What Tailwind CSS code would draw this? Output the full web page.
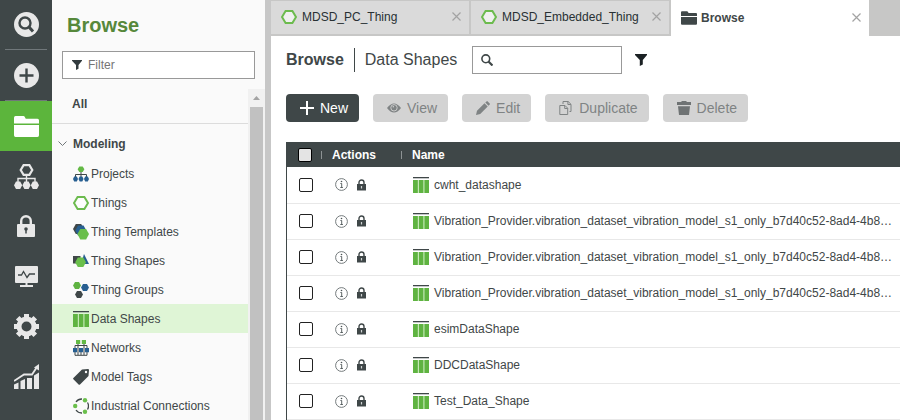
<!DOCTYPE html>
<html lang="en">
<head>
<meta charset="utf-8">
<meta name="viewport" content="width=device-width, initial-scale=1">
<title>Browse - Data Shapes</title>
<script src="https://cdn.jsdelivr.net/npm/@tailwindcss/browser@4"></script>
</head>
<body class="flex h-screen overflow-hidden bg-white font-['Liberation_Sans',Arial,sans-serif] text-xs text-[#3f4748]">

<!-- Shared icons -->
<svg class="hidden" aria-hidden="true">
  <symbol id="hexagon" viewBox="0 0 16 16"><path d="M4.6 2h6.8L15 8l-3.600 6H4.600L1 8z" fill="#fff" fill-opacity=".6" stroke="#6cbb4e" stroke-width="2"/></symbol>
  <symbol id="shape" viewBox="0 0 16 16"><path d="M0 0h16v1.300H0z" fill="#3f4748"/><path d="M0 3h16v13H0z" fill="#c4e8b5"/><path d="M0 3h4.800v13H0zM6 3h4.300v13H6zM11.500 3H16v13h-4.500z" fill="#5fb341"/></symbol>
  <symbol id="funnel" viewBox="0 0 12 12"><path d="M0 0h12v1L7.800 6v4.500L4.800 12V6L0 1z" fill="currentColor"/></symbol>
  <symbol id="close" viewBox="0 0 9 9"><path d="M.5.5l8 8M8.500.5l-8 8" stroke="#a3a3a3" stroke-width="1.200" fill="none"/></symbol>
  <symbol id="folder" viewBox="0 0 24 20"><path d="M0 7V1.500Q0 0 1.500 0H9q1 0 1.500 1l.8 1.600h11.200q1.500 0 1.500 1.500V7zM0 8.600h24v9.900q0 1.500-1.500 1.500h-21Q0 20 0 18.500z" fill="currentColor"/></symbol>
  <symbol id="info" viewBox="0 0 13 13"><circle cx="6.500" cy="6.500" r="5.900" fill="none" stroke="#666d6f" stroke-width=".9"/><path d="M5.400 5.500h1.300v4M5.300 9.500h2.600" fill="none" stroke="#4b5355" stroke-width=".9"/><circle cx="6.500" cy="3.500" r=".8" fill="#4b5355"/></symbol>
  <symbol id="lock" viewBox="0 0 9 12"><path d="M2 5.500V3.500a2.500 2.500 0 0 1 5 0v2" fill="none" stroke="#3f4748" stroke-width="1.400"/><path d="M0 5h9v6.500H0z" fill="#3f4748"/><path d="M4.500 7v2.500" stroke="#cfd3d4" stroke-width="1.200"/></symbol>
</svg>

<!-- Icon rail -->
<nav class="flex w-[52px] shrink-0 flex-col bg-[#3f4748] text-[#e8e8e8]" aria-label="Main">
  <button type="button" aria-label="Search" class="flex h-[49px] items-center justify-center">
    <svg class="size-[25px]" viewBox="0 0 25 25"><circle cx="12.500" cy="12.500" r="12.500" fill="currentColor"/><circle cx="11" cy="11" r="5.500" fill="none" stroke="#3f4748" stroke-width="2.400"/><path d="M15 15l4 4.500" stroke="#3f4748" stroke-width="3"/></svg>
  </button>
  <div class="mx-[5px] h-px bg-[#70777a]"></div>
  <button type="button" aria-label="New" class="flex h-[50px] items-center justify-center">
    <svg class="size-[25px]" viewBox="0 0 25 25"><circle cx="12.500" cy="12.500" r="12.500" fill="currentColor"/><path d="M12.500 5.500v14M5.500 12.500h14" stroke="#3f4748" stroke-width="2.400"/></svg>
  </button>
  <div class="mx-[5px] h-px bg-[#70777a]"></div>
  <button type="button" aria-label="Browse" class="flex h-[50px] items-center justify-center bg-[#5cb53c] text-white">
    <svg class="h-[21px] w-[25px]"><use href="#folder"/></svg>
  </button>
  <button type="button" aria-label="Things" class="flex h-[50px] items-center justify-center">
    <svg class="size-[25px]" viewBox="0 0 25 25"><path d="M9.600 1.200h5.800L18.300 6l-2.900 4.800H9.600L6.700 6z" fill="none" stroke="currentColor" stroke-width="2.200"/><path d="M12.500 11v8M4 19v-4.500h17V19" fill="none" stroke="currentColor" stroke-width="1.400"/><path d="M2 17.500h4.200l2 3.700-2 3.800H2l-2-3.800zM10.400 17.500h4.200l2 3.700-2 3.800h-4.200l-2-3.800zM18.800 17.500H23l2 3.700-2 3.800h-4.200l-2-3.800z" fill="currentColor"/></svg>
  </button>
  <button type="button" aria-label="Security" class="flex h-[50px] items-center justify-center">
    <svg class="h-[22px] w-[18px]" viewBox="0 0 18 22"><path d="M4.200 10V6a4.800 4.800 0 0 1 9.600 0v4" fill="none" stroke="currentColor" stroke-width="2.400"/><rect y="9" width="18" height="13" rx="1" fill="currentColor"/><circle cx="9" cy="14" r="1.800" fill="#3f4748"/><path d="M9 14v4.500" stroke="#3f4748" stroke-width="1.500"/></svg>
  </button>
  <button type="button" aria-label="Monitoring" class="flex h-[50px] items-center justify-center">
    <svg class="h-[21px] w-[23px]" viewBox="0 0 23 21"><rect width="23" height="17" rx="1" fill="currentColor"/><path d="M11.500 17v3M5 20h13" stroke="currentColor" stroke-width="2"/><path d="M3 9h3.500l2-3.500 3.500 6L14.500 8H20" fill="none" stroke="#3f4748" stroke-width="1.300"/></svg>
  </button>
  <button type="button" aria-label="Settings" class="flex h-[50px] items-center justify-center">
    <svg class="size-[25px]" viewBox="0 0 25 25"><circle cx="12.500" cy="12.500" r="7.500" fill="none" stroke="currentColor" stroke-width="5"/><path d="M12.500 0v4M12.500 21v4M0 12.500h4M21 12.500h4M3.700 3.700l2.800 2.800M18.500 18.500l2.800 2.800M3.700 21.300l2.800-2.800M18.500 6.500l2.800-2.800" stroke="currentColor" stroke-width="5"/></svg>
  </button>
  <button type="button" aria-label="Analytics" class="flex h-[50px] items-center justify-center">
    <svg class="size-[25px]" viewBox="0 0 25 25"><path d="M0 20.500l4.500-2V25H0zM6.500 17l4.500-2V25H6.500zM13 14h5v11h-5zM20 11.500l5-3V25h-5z" fill="currentColor"/><path d="M0 17l10-6.500h8L23 3" fill="none" stroke="currentColor" stroke-width="1.800"/><path d="M20 3.500L25 0v6.500z" fill="currentColor"/></svg>
  </button>
</nav>

<!-- Browse panel -->
<aside class="flex w-[213px] shrink-0 flex-col bg-[#fafafa]">
  <h2 class="mt-3 pl-[15px] text-xl leading-[26px] font-bold text-[#56883b]">Browse</h2>
  <label class="mx-2.5 mt-[13px] flex h-7 items-center gap-1.5 border border-[#999] bg-white pl-[9px]">
    <svg class="size-[10px] text-[#323b3e]"><use href="#funnel"/></svg>
    <input type="text" placeholder="Filter" aria-label="Filter" class="min-w-0 flex-1 outline-none placeholder:text-[#757575]">
  </label>
  <div class="mt-2.5 flex min-h-0 flex-1">
    <nav class="min-w-0 flex-1 overflow-hidden" aria-label="Entities">
      <a href="#" class="flex h-[35px] items-center border-b border-[#dcdcdc] pb-1 pl-5 font-bold">All</a>
      <button type="button" class="flex h-[35px] w-full items-center gap-1.5 pt-1 pl-1.5 font-bold">
        <svg class="h-[5px] w-[9px]" viewBox="0 0 9 5" fill="none"><path d="M.5.5l4 4 4-4" stroke="#70777a"/></svg>
        Modeling
      </button>
      <a href="#" class="flex h-[29px] items-center gap-0.5 pl-[21px]">
        <svg class="size-4" viewBox="0 0 16 16"><path d="M8 5v7M2.500 12V8.500h11V12" fill="none" stroke="#3f4748"/><path d="M6.300.5h3.400L11.400 3.300 9.700 6H6.300L4.600 3.300z" fill="#63b945"/><path d="M1.200 10.500h2.600L5 13l-1.200 2.500H1.200L0 13zM6.700 10.500h2.600l1.200 2.500-1.200 2.500H6.700L5.500 13zM12.200 10.500h2.600L16 13l-1.200 2.500h-2.600L11 13z" fill="#275f91"/></svg>
        Projects
      </a>
      <a href="#" class="flex h-[29px] items-center gap-0.5 pl-[21px]">
        <svg class="size-4"><use href="#hexagon"/></svg>
        Things
      </a>
      <a href="#" class="flex h-[29px] items-center gap-0.5 pl-[21px]">
        <svg class="size-4" viewBox="0 0 16 16"><path d="M2.800 0h5.400L11 5l-2.800 5H2.800L0 5z" fill="#3f4748"/><path d="M5 1.500h5.600L13.300 6.500l-2.700 5H5l-2.800-5z" fill="#275f91"/><path d="M7.300 5h5.800l2.900 5-2.900 5.500H7.300L4.400 10z" fill="#6abf4b"/></svg>
        Thing Templates
      </a>
      <a href="#" class="flex h-[29px] items-center gap-0.5 pl-[21px]">
        <svg class="size-4" viewBox="0 0 16 16"><path d="M0 3h7.500v7.500H0z" fill="#3f4748"/><path d="M11 1l5 10H8z" fill="#275f91"/><path d="M4.800 4.500h5.500L13 9.300 10.300 14H4.800L2.200 9.300z" fill="#6abf4b"/></svg>
        Thing Shapes
      </a>
      <a href="#" class="flex h-[29px] items-center gap-0.5 pl-[21px]">
        <svg class="size-4" viewBox="0 0 16 16"><path d="M2 0h4l2 3.500L6 7H2L0 3.500z" fill="#5fb341"/><path d="M10 2h4l2 3.500L14 9h-4L8 5.500z" fill="#275f91"/><path d="M4 9h4l2 3.500L8 16H4l-2-3.500z" fill="#3f4748"/></svg>
        Thing Groups
      </a>
      <a href="#" aria-current="page" class="flex h-[29px] items-center gap-0.5 bg-[#dff5d6] pl-[21px]">
        <svg class="size-4"><use href="#shape"/></svg>
        Data Shapes
      </a>
      <a href="#" class="flex h-[29px] items-center gap-0.5 pl-[21px]">
        <svg class="size-4" viewBox="0 0 16 16"><path d="M5 4v11M11 4v11M8 8v7M2 8V5.500h12V8M2 12v3.300h12V12" fill="none" stroke="#3f4748"/><path d="M3 0h4.200v4H3zM8.800 0H13v4H8.800z" fill="#63b945"/><path d="M0 8h4v4.200H0zM6 8h4v4.200H6zM12 8h4v4.200h-4z" fill="#275f91"/></svg>
        Networks
      </a>
      <a href="#" class="flex h-[29px] items-center gap-0.5 pl-[21px]">
        <svg class="size-4" viewBox="0 0 16 16"><path d="M9 .5L15 0q1 0 1 1l-.5 6L7 15.500q-.7.700-1.400 0L.4 10.300q-.7-.7 0-1.400z" fill="#3f4748"/><circle cx="13" cy="3" r="1.200" fill="#fafafa"/></svg>
        Model Tags
      </a>
      <a href="#" class="flex h-[29px] items-center gap-0.5 pl-[21px]">
        <svg class="size-4" viewBox="0 0 16 16"><path d="M3 4A7 7 0 0 1 9 1M14.500 4.500a7 7 0 0 1 0 7M9 15a7 7 0 0 1-6-3" fill="none" stroke="#3f4748" stroke-width="1.300"/><circle cx="2.200" cy="8" r="2.200" fill="#6abf4b"/><circle cx="12" cy="2.200" r="2.200" fill="#6abf4b"/><circle cx="12" cy="13.800" r="2.200" fill="#6abf4b"/></svg>
        Industrial Connections
      </a>
    </nav>
    <div class="flex w-[17px] flex-col items-center bg-[#f1f1f1]" aria-hidden="true">
      <svg class="my-[7px] h-[4px] w-[7px] shrink-0" viewBox="0 0 7 4"><path d="M3.500 0L7 4H0z" fill="#a3a3a3"/></svg>
      <div class="w-[13px] flex-1 bg-[#c1c1c1]"></div>
    </div>
  </div>
</aside>

<div class="w-1.5 shrink-0 bg-[#c7c7c7]"></div>

<!-- Workspace -->
<main class="flex min-w-0 flex-1 flex-col">
  <div class="flex h-9 shrink-0 gap-0.5 bg-[#c7c7c6] text-[#283033]">
    <div class="mt-px mb-0.5 flex w-[198px] items-center bg-[#dadada] pr-2 pb-0.5 pl-2.5">
      <a href="#" class="flex flex-1 items-center gap-[5px]"><svg class="size-4"><use href="#hexagon"/></svg>MDSD_PC_Thing</a>
      <button type="button" aria-label="Close MDSD_PC_Thing"><svg class="size-[9px]"><use href="#close"/></svg></button>
    </div>
    <div class="mt-px mb-0.5 flex w-[198px] items-center bg-[#dadada] pr-2 pb-0.5 pl-2.5">
      <a href="#" class="flex flex-1 items-center gap-[5px]"><svg class="size-4"><use href="#hexagon"/></svg>MDSD_Embedded_Thing</a>
      <button type="button" aria-label="Close MDSD_Embedded_Thing"><svg class="size-[9px]"><use href="#close"/></svg></button>
    </div>
    <div class="flex w-[198px] items-center bg-white pr-2 pl-2.5">
      <a href="#" class="flex flex-1 items-center gap-1 font-bold text-[#3f4748]"><svg class="h-[14px] w-4"><use href="#folder"/></svg>Browse</a>
      <button type="button" aria-label="Close Browse" class="pb-0.5"><svg class="size-[9px]"><use href="#close"/></svg></button>
    </div>
  </div>

  <header class="mt-2.5 flex h-7 shrink-0 items-center pl-[15px] text-base">
    <h1 class="border-r border-[#3f4748] pr-2.5 font-bold">Browse</h1>
    <span class="pl-2.5">Data Shapes</span>
    <label class="ml-[15px] flex h-7 w-[150px] items-center gap-1.5 border border-[#999] pl-2">
      <svg class="size-3 shrink-0" viewBox="0 0 12 12"><circle cx="4.800" cy="4.800" r="3.900" fill="none" stroke="#3f4748" stroke-width="1.600"/><path d="M7.500 7.500l4 4" stroke="#3f4748" stroke-width="2.200"/></svg>
      <input type="text" aria-label="Search data shapes" class="min-w-0 flex-1 text-xs outline-none">
    </label>
    <button type="button" aria-label="Advanced filter" class="ml-[13px] text-[#1b2124]"><svg class="size-3"><use href="#funnel"/></svg></button>
  </header>

  <div class="mt-5 flex h-7 shrink-0 gap-3.5 pl-[15px] text-sm">
    <button type="button" class="flex items-center gap-1.5 rounded bg-[#3f4748] pr-[11px] pl-3.5 text-white">
      <svg class="size-3.5" viewBox="0 0 14 14"><path d="M7 0v14M0 7h14" stroke="currentColor" stroke-width="2"/></svg>New</button>
    <button type="button" disabled class="flex items-center gap-1.5 rounded bg-[#d3d3d3] pr-[11px] pl-3.5 text-[#7f8384]">
      <svg class="size-3.5" viewBox="0 0 14 14"><path d="M0 7q7-9 14 0-7 9-14 0z" fill="currentColor"/><circle cx="7" cy="6.800" r="3.200" fill="none" stroke="#d3d3d3" stroke-width=".9"/><circle cx="6.300" cy="5.800" r=".8" fill="#d3d3d3"/></svg>View</button>
    <button type="button" disabled class="flex items-center gap-1.5 rounded bg-[#d3d3d3] pr-[11px] pl-3.5 text-[#7f8384]">
      <svg class="size-3.5" viewBox="0 0 14 14"><path d="M0 14l1-4.200L8.500 2.300l3.200 3.200L4.200 13zM9.300 1.500L10.500.4q.6-.6 1.200 0l2 2q.6.600 0 1.200L12.500 4.700z" fill="currentColor"/></svg>Edit</button>
    <button type="button" disabled class="flex items-center gap-1.5 rounded bg-[#d3d3d3] pr-[11px] pl-3.5 text-[#7f8384]">
      <svg class="size-3.5" viewBox="0 0 14 14" fill="none" stroke="currentColor"><path d="M.8 4.500H6l2.700 2.700v6.300H.8zM5.700 4.500v3h3M4 3V.5h5.200L12 3.300V10.500h-1.500M8.900.5v3h3"/></svg>Duplicate</button>
    <button type="button" disabled class="flex items-center gap-1.5 rounded bg-[#d3d3d3] pr-[11px] pl-3.5 text-[#7f8384]">
      <svg class="size-3.5" viewBox="0 0 14 14"><path d="M0 1h4.500V0h5v1H14v3H0zM1 5.200h12L12 14H2z" fill="#6f7374"/></svg>Delete</button>
  </div>

  <div class="mt-5 ml-[15px] min-h-0 flex-1 overflow-hidden border-l border-[#3f4748]">
    <table class="w-full table-fixed border-collapse text-left">
      <thead class="bg-[#3f4748] text-white">
        <tr class="h-[25px]">
          <th class="w-[34px] pl-[11px]"><input type="checkbox" aria-label="Select all" class="block size-3.5 appearance-none rounded-xs border border-black bg-[#e4e4e4]"></th>
          <th class="w-20"><span class="flex items-center gap-2.5"><i class="h-2 w-px bg-[#8d9394]"></i>Actions</span></th>
          <th><span class="flex items-center gap-2.5"><i class="h-2 w-px bg-[#8d9394]"></i>Name</span></th>
        </tr>
      </thead>
      <tbody>
        <tr class="h-9 border-b border-[#e8e8e8]">
          <td class="pl-3"><input type="checkbox" aria-label="Select cwht_datashape" class="block size-3.5 appearance-none rounded-xs border border-[#222]"></td>
          <td><div class="flex items-center gap-[9px] pl-3.5"><button type="button" aria-label="Info"><svg class="size-[13px]"><use href="#info"/></svg></button><svg class="h-3 w-[9px]"><use href="#lock"/></svg></div></td>
          <td><a href="#" class="flex items-center gap-[5px] pl-3"><svg class="size-4 shrink-0"><use href="#shape"/></svg>cwht_datashape</a></td>
        </tr>
        <tr class="h-9 border-b border-[#e8e8e8]">
          <td class="pl-3"><input type="checkbox" aria-label="Select vibration model 1" class="block size-3.5 appearance-none rounded-xs border border-[#222]"></td>
          <td><div class="flex items-center gap-[9px] pl-3.5"><button type="button" aria-label="Info"><svg class="size-[13px]"><use href="#info"/></svg></button><svg class="h-3 w-[9px]"><use href="#lock"/></svg></div></td>
          <td><a href="#" class="flex items-center gap-[5px] pl-3 whitespace-nowrap"><svg class="size-4 shrink-0"><use href="#shape"/></svg>Vibration_Provider.vibration_dataset_vibration_model_s1_only_b7d40c52-8ad4-4b8…</a></td>
        </tr>
        <tr class="h-9 border-b border-[#e8e8e8]">
          <td class="pl-3"><input type="checkbox" aria-label="Select vibration model 2" class="block size-3.5 appearance-none rounded-xs border border-[#222]"></td>
          <td><div class="flex items-center gap-[9px] pl-3.5"><button type="button" aria-label="Info"><svg class="size-[13px]"><use href="#info"/></svg></button><svg class="h-3 w-[9px]"><use href="#lock"/></svg></div></td>
          <td><a href="#" class="flex items-center gap-[5px] pl-3 whitespace-nowrap"><svg class="size-4 shrink-0"><use href="#shape"/></svg>Vibration_Provider.vibration_dataset_vibration_model_s1_only_b7d40c52-8ad4-4b8…</a></td>
        </tr>
        <tr class="h-9 border-b border-[#e8e8e8]">
          <td class="pl-3"><input type="checkbox" aria-label="Select vibration model 3" class="block size-3.5 appearance-none rounded-xs border border-[#222]"></td>
          <td><div class="flex items-center gap-[9px] pl-3.5"><button type="button" aria-label="Info"><svg class="size-[13px]"><use href="#info"/></svg></button><svg class="h-3 w-[9px]"><use href="#lock"/></svg></div></td>
          <td><a href="#" class="flex items-center gap-[5px] pl-3 whitespace-nowrap"><svg class="size-4 shrink-0"><use href="#shape"/></svg>Vibration_Provider.vibration_dataset_vibration_model_s1_only_b7d40c52-8ad4-4b8…</a></td>
        </tr>
        <tr class="h-9 border-b border-[#e8e8e8]">
          <td class="pl-3"><input type="checkbox" aria-label="Select esimDataShape" class="block size-3.5 appearance-none rounded-xs border border-[#222]"></td>
          <td><div class="flex items-center gap-[9px] pl-3.5"><button type="button" aria-label="Info"><svg class="size-[13px]"><use href="#info"/></svg></button><svg class="h-3 w-[9px]"><use href="#lock"/></svg></div></td>
          <td><a href="#" class="flex items-center gap-[5px] pl-3"><svg class="size-4 shrink-0"><use href="#shape"/></svg>esimDataShape</a></td>
        </tr>
        <tr class="h-9 border-b border-[#e8e8e8]">
          <td class="pl-3"><input type="checkbox" aria-label="Select DDCDataShape" class="block size-3.5 appearance-none rounded-xs border border-[#222]"></td>
          <td><div class="flex items-center gap-[9px] pl-3.5"><button type="button" aria-label="Info"><svg class="size-[13px]"><use href="#info"/></svg></button><svg class="h-3 w-[9px]"><use href="#lock"/></svg></div></td>
          <td><a href="#" class="flex items-center gap-[5px] pl-3"><svg class="size-4 shrink-0"><use href="#shape"/></svg>DDCDataShape</a></td>
        </tr>
        <tr class="h-9 border-b border-[#e8e8e8]">
          <td class="pl-3"><input type="checkbox" aria-label="Select Test_Data_Shape" class="block size-3.5 appearance-none rounded-xs border border-[#222]"></td>
          <td><div class="flex items-center gap-[9px] pl-3.5"><button type="button" aria-label="Info"><svg class="size-[13px]"><use href="#info"/></svg></button><svg class="h-3 w-[9px]"><use href="#lock"/></svg></div></td>
          <td><a href="#" class="flex items-center gap-[5px] pl-3"><svg class="size-4 shrink-0"><use href="#shape"/></svg>Test_Data_Shape</a></td>
        </tr>
      </tbody>
    </table>
  </div>
</main>
</body>
</html>
